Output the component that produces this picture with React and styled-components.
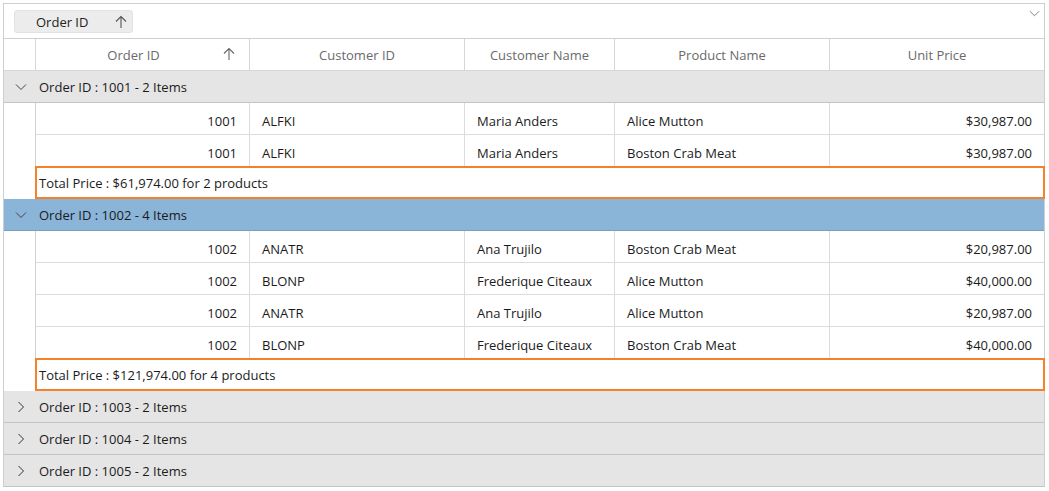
import React from "react";
import styled, { createGlobalStyle } from "styled-components";

const Global = createGlobalStyle`
  html, body { margin: 0; padding: 0; background: #fff; }
  body { font-family: "Open Sans", "Noto Sans", sans-serif; color: #1b1b1b; }
`;

const COLS = "31px 214px 215px 150px 215px 215px";

const Page = styled.div`
  padding: 3px 0 0 3px;
`;

const Grid = styled.div`
  width: 1042px;
  border: 1px solid #cfcfcf;
  border-bottom: none;
  box-sizing: border-box;
`;

const DropArea = styled.div`
  height: 34px;
  position: relative;
  display: flex;
  align-items: center;
  padding-left: 10px;
  border-bottom: 1px solid #cfcfcf;
`;

const Chip = styled.div`
  width: 119px;
  height: 23px;
  box-sizing: border-box;
  background: #ececec;
  border: 1px solid #e2e2e2;
  border-radius: 3px;
  display: flex;
  align-items: center;
  justify-content: space-between;
  padding: 0 5px 0 21px;
  font-size: 13px;
  color: #222;
  margin-top: 1px;
`;

const CornerToggle = styled.div`
  position: absolute;
  right: 4px;
  top: 4px;
  display: flex;
`;

const Row = styled.div`
  display: grid;
  grid-template-columns: ${COLS};
  height: ${(p) => p.$h || 32}px;
  box-sizing: border-box;
`;

const HeaderCell = styled.div`
  display: flex;
  align-items: center;
  justify-content: center;
  position: relative;
  font-size: 13px;
  color: #6a6a6a;
  padding-right: ${(p) => (p.$sorted ? 18 : 0)}px;
  border-left: ${(p) => (p.$first ? "none" : "1px solid #d6d6d6")};
  border-bottom: 1px solid #d6d6d6;
`;

const SortIcon = styled.span`
  position: absolute;
  right: 14px;
  top: 8px;
  display: flex;
`;

const GroupRow = styled.div`
  display: flex;
  align-items: center;
  height: 32px;
  box-sizing: border-box;
  background: ${(p) => (p.$selected ? "#8ab4d8" : "#e5e5e5")};
  border-bottom: 1px solid ${(p) => (p.$selected ? "#7a9fbf" : "#c4c4c4")};
  font-size: 13px;
  color: #1b1b1b;
`;

const Expander = styled.span`
  width: 31px;
  display: flex;
  justify-content: center;
  align-items: center;
  padding-left: 1px;
`;

const GroupText = styled.span`
  padding-left: 3px;
`;

const Indent = styled.div``;

const Cell = styled.div`
  display: flex;
  align-items: center;
  justify-content: ${(p) => (p.$right ? "flex-end" : "flex-start")};
  padding: 4px 12px 0 12px;
  font-size: 13px;
  color: #1b1b1b;
  border-left: 1px solid ${(p) => (p.$first ? "#d0d0d0" : "#dcdcdc")};
  border-bottom: 1px solid #dcdcdc;
  white-space: nowrap;
`;

const SummaryBox = styled.div`
  grid-column: 2 / 7;
  border: 2px solid #f5812a;
  margin-right: -1px;
  margin-top: -1px;
  display: flex;
  align-items: center;
  padding-left: 2px;
  font-size: 13px;
  color: #1b1b1b;
`;

const ChevronDown = ({ size = 12, color = "#555" }) => (
  <svg width={size} height={size} viewBox="0 0 12 12">
    <path d="M1 3.5 L6 8.5 L11 3.5" fill="none" stroke={color} strokeWidth="1" />
  </svg>
);

const ChevronRight = ({ color = "#333" }) => (
  <svg width="12" height="12" viewBox="0 0 12 12">
    <path d="M3.5 1 L8.5 6 L3.5 11" fill="none" stroke={color} strokeWidth="1" />
  </svg>
);

const ArrowUp = ({ color = "#666" }) => (
  <svg width="12" height="14" viewBox="0 0 12 14">
    <path d="M6 1.5 V13 M1 6.5 L6 1.5 L11 6.5" fill="none" stroke={color} strokeWidth="1.1" />
  </svg>
);

const groups = [
  {
    id: 1001,
    rows: [
      ["1001", "ALFKI", "Maria Anders", "Alice Mutton", "$30,987.00"],
      ["1001", "ALFKI", "Maria Anders", "Boston Crab Meat", "$30,987.00"],
    ],
    total: "$61,974.00",
  },
  {
    id: 1002,
    selected: true,
    rows: [
      ["1002", "ANATR", "Ana Trujilo", "Boston Crab Meat", "$20,987.00"],
      ["1002", "BLONP", "Frederique Citeaux", "Alice Mutton", "$40,000.00"],
      ["1002", "ANATR", "Ana Trujilo", "Alice Mutton", "$20,987.00"],
      ["1002", "BLONP", "Frederique Citeaux", "Boston Crab Meat", "$40,000.00"],
    ],
    total: "$121,974.00",
  },
  { id: 1003, count: 2 },
  { id: 1004, count: 2 },
  { id: 1005, count: 2 },
];

const headers = ["Order ID", "Customer ID", "Customer Name", "Product Name", "Unit Price"];

export default function App() {
  return (
    <>
      <Global />
      <Page>
        <Grid>
          <DropArea>
            <Chip>
              <span>Order ID</span>
              <ArrowUp color="#555" />
            </Chip>
            <CornerToggle>
              <ChevronDown size={11} color="#777" />
            </CornerToggle>
          </DropArea>
          <Row $h={32}>
            <HeaderCell $first />
            {headers.map((h, i) => (
              <HeaderCell key={h} $sorted={i === 0}>
                {h}
                {i === 0 && (
                  <SortIcon>
                    <ArrowUp />
                  </SortIcon>
                )}
              </HeaderCell>
            ))}
          </Row>
          {groups.map((g) => (
            <React.Fragment key={g.id}>
              <GroupRow $selected={g.selected}>
                <Expander>{g.rows ? <ChevronDown color="#444" /> : <ChevronRight />}</Expander>
                <GroupText>
                  Order ID : {g.id} - {g.rows ? g.rows.length : g.count} Items
                </GroupText>
              </GroupRow>
              {g.rows &&
                g.rows.map((r, ri) => (
                  <Row key={ri}>
                    <Indent />
                    <Cell $right $first>{r[0]}</Cell>
                    <Cell>{r[1]}</Cell>
                    <Cell>{r[2]}</Cell>
                    <Cell>{r[3]}</Cell>
                    <Cell $right>{r[4]}</Cell>
                  </Row>
                ))}
              {g.rows && (
                <Row>
                  <Indent />
                  <SummaryBox>
                    Total Price : {g.total} for {g.rows.length} products
                  </SummaryBox>
                </Row>
              )}
            </React.Fragment>
          ))}
        </Grid>
      </Page>
    </>
  );
}
